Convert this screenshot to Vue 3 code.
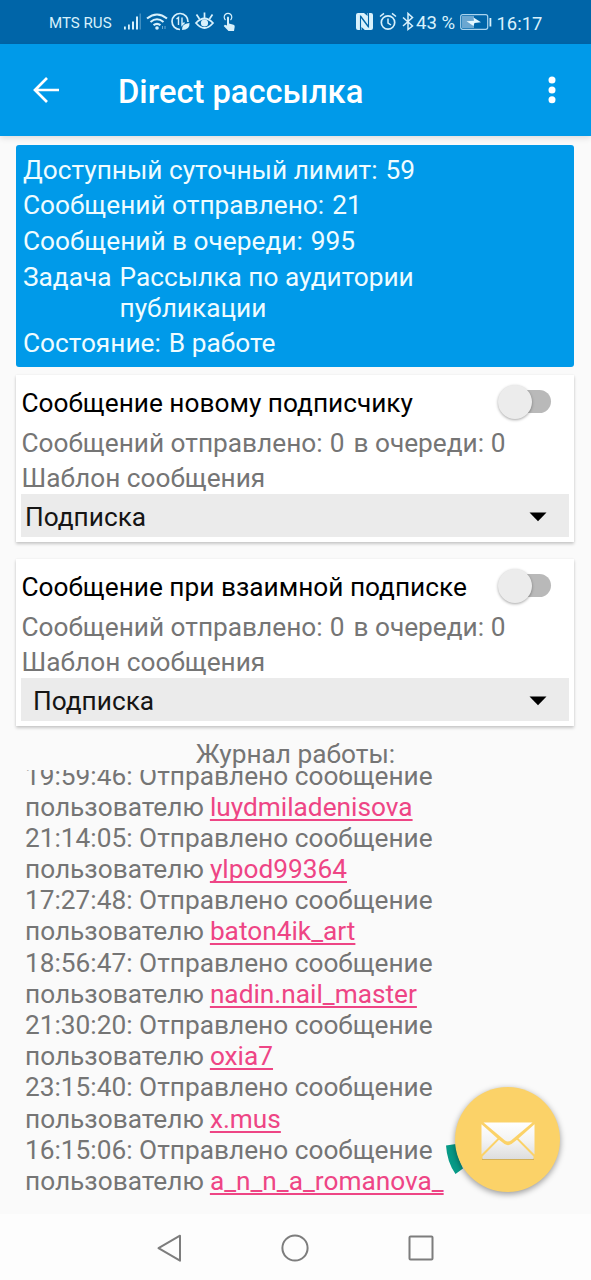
<script setup>
const stats = [
  { label: 'Доступный суточный лимит:', value: '59' },
  { label: 'Сообщений отправлено:', value: '21' },
  { label: 'Сообщений в очереди:', value: '995' },
  { label: 'Задача', value: 'Рассылка по аудитории публикации' },
  { label: 'Состояние:', value: 'В работе' },
]
const cards = [
  { title: 'Сообщение новому подписчику', template: 'Подписка', inset: false },
  { title: 'Сообщение при взаимной подписке', template: 'Подписка', inset: true },
]
const log = [
  { time: '19:59:46', user: 'luydmiladenisova' },
  { time: '21:14:05', user: 'ylpod99364' },
  { time: '17:27:48', user: 'baton4ik_art' },
  { time: '18:56:47', user: 'nadin.nail_master' },
  { time: '21:30:20', user: 'oxia7' },
  { time: '23:15:40', user: 'x.mus' },
  { time: '16:15:06', user: 'a_n_n_a_romanova_' },
]
</script>

<template>
  <div class="screen">
    <div class="status">
      <span class="carrier">MTS RUS</span>
      <svg class="left-icons" width="116" height="24" viewBox="0 0 116 24" fill="none" stroke="#d8f1fc">
        <g fill="#d8f1fc" stroke="none">
          <rect x="1" y="16.500" width="1.800" height="3" /><rect x="5" y="14.500" width="1.800" height="5" />
          <rect x="9" y="11.500" width="2" height="8" /><rect x="13" y="6.500" width="2" height="13" />
          <rect x="16.500" y="3.500" width="1.500" height="16" opacity=".3" />
        </g>
        <g stroke-width="2.100">
          <path d="M24 8.500Q34 .5 44 8.500" /><path d="M27.500 12Q34 6.500 40.500 12" /><path d="M30.500 15.200Q34 12.500 37.500 15.200" />
        </g>
        <circle cx="34" cy="18" r="1.800" fill="#d8f1fc" stroke="none" />
        <path d="M39.500 16v3M42 16v3" stroke-width="1" opacity=".5" />
        <path d="M65 12A8 8 0 1 0 57 19.500" stroke-width="1.700" />
        <path d="M53.500 9L55.500 7.500v7.500M59 7.500v7.500l2.500-2.500" stroke-width="1.400" />
        <path d="M59 20q-.5-6.500 7.500-7q.5 7-7.500 7z" fill="#d8f1fc" stroke="none" />
        <path d="M73 13Q81.500 4 90 13Q81.500 23 73 13z" stroke-width="1.800" />
        <circle cx="81.500" cy="13" r="3.600" fill="#d8f1fc" stroke="none" />
        <path d="M81.500 8V2.500M76.500 9L73.500 4.500M86.500 9l3-4.500" stroke-width="1.700" />
        <path d="M102.500 10a3.800 3.800 0 1 1 5 0" stroke-width="1.200" />
        <path d="M104 7.500q1-1.800 2 0v6l4.500 1.300q1.500.6 1.200 2l-.7 4.200h-5.500l-4.800-5 1.200-1.200 2.100.7z" fill="#d8f1fc" stroke="none" />
      </svg>
      <svg class="right-icons" width="60" height="24" viewBox="0 0 60 24" fill="none" stroke="#d8f1fc">
        <rect x="0" y="3" width="17" height="17" rx="2" fill="#d8f1fc" stroke="none" />
        <path d="M4.500 20V6.500L12.300 17M12.500 3V16.500L4.700 6" stroke="#0065a8" stroke-width="1.100" />
        <path d="M8 3h3.500v3zM5.500 17l3.300 3H5.500z" fill="#0065a8" stroke="none" />
        <circle cx="32" cy="12.500" r="6.700" stroke-width="1.700" />
        <path d="M32 8.500V13l3 2M24 6.500l4-3.200M36 3.300l4 3.200" stroke-width="1.500" />
        <path d="M47 7.500L56.500 16L52 19.500V3.500L56.500 7.500L47 16" stroke-width="1.500" />
      </svg>
      <span class="percent">43 %</span>
      <svg class="battery" width="32" height="16" viewBox="0 0 32 16">
        <rect x=".7" y=".7" width="27" height="14.600" rx="2" fill="none" stroke="#a9d4ee" stroke-width="1.200" />
        <rect x="2" y="2" width="12" height="12" fill="#6ba7d1" />
        <path d="M6.500 7.300L14 6.800L13.500 3.500L21 8.200L14.500 9L13.500 12z" fill="#e4f7ff" />
        <rect x="29.500" y="4" width="1.800" height="8.500" fill="#d8f1fc" />
      </svg>
      <span class="clock">16:17</span>
    </div>

    <header class="bar">
      <svg class="back" width="28" height="28" viewBox="0 0 28 28" fill="none" stroke="#fff" stroke-width="2.700">
        <path d="M27 14H3M15 2L3 14L15 26" />
      </svg>
      <h1>Direct рассылка</h1>
      <svg class="more" width="8" height="28" viewBox="0 0 8 28" fill="#fff">
        <circle cx="4" cy="4" r="3.500" /><circle cx="4" cy="14" r="3.500" /><circle cx="4" cy="23.800" r="3.500" />
      </svg>
    </header>

    <section class="summary">
      <div v-for="s in stats" :key="s.label" class="stat">
        <span>{{ s.label }}</span><span class="value">{{ s.value }}</span>
      </div>
    </section>

    <section v-for="c in cards" :key="c.title" class="card">
      <div class="card-head">
        <span class="card-title">{{ c.title }}</span>
        <span class="switch"><i class="track"></i><i class="thumb"></i></span>
      </div>
      <div class="muted sent">Сообщений отправлено: <span class="count">0</span> в очереди: 0</div>
      <div class="muted tpl">Шаблон сообщения</div>
      <div class="select" :class="{ inset: c.inset }">
        <span>{{ c.template }}</span>
        <svg width="18" height="10" viewBox="0 0 18 10"><path d="M.5 .5h17L9 9.300z" fill="#000" /></svg>
      </div>
    </section>

    <div class="log-title">Журнал работы:</div>
    <div class="log">
      <div class="log-inner">
        <div v-for="l in log" :key="l.time">
          <div class="line">{{ l.time }}: Отправлено сообщение</div>
          <div class="line">пользователю <a>{{ l.user }}</a></div>
        </div>
      </div>
    </div>

    <nav class="nav">
      <svg width="26" height="30" viewBox="0 0 26 30" fill="none" stroke="#7d7d7d" stroke-width="2" stroke-linejoin="round"><path d="M1.500 15.200L23 2.700V27.700z" /></svg>
      <svg width="30" height="30" viewBox="0 0 30 30" fill="none" stroke="#7d7d7d" stroke-width="2"><circle cx="15" cy="15" r="12.600" /></svg>
      <svg width="26" height="30" viewBox="0 0 26 30" fill="none" stroke="#7d7d7d" stroke-width="2"><rect x="1.500" y="3.500" width="23" height="23" rx="1" /></svg>
    </nav>

    <svg class="spinner" width="20" height="32" viewBox="0 0 20 32"><path d="M0 1.500L10 0Q11 12 17 24.500L9.500 30Q1 18 0 1.500z" fill="#089a87" /></svg>
    <div class="fab">
      <svg width="54" height="38" viewBox="0 0 54 38">
        <defs>
          <linearGradient id="paper" gradientUnits="userSpaceOnUse" x1="0" y1="0" x2="0" y2="38">
            <stop offset="0" stop-color="#fff" /><stop offset=".5" stop-color="#f3f3f3" /><stop offset="1" stop-color="#dcdcdc" />
          </linearGradient>
        </defs>
        <path d="M1 36.500h52v1.500H1z" fill="#b99b50" opacity=".6" />
        <path d="M2.500 .5h49L30 18.500Q27 20.500 24 18.500z" fill="url(#paper)" />
        <path d="M.5 2.200L16.500 16.500L.5 32.500z" fill="url(#paper)" />
        <path d="M53.500 2.200L37.500 16.500L53.500 32.500z" fill="url(#paper)" />
        <path d="M18 17.800L23.500 22Q27 24.300 30.500 22L36 17.800L52.500 34.500V37H1.500V34.500z" fill="url(#paper)" />
      </svg>
    </div>
  </div>
</template>

<style>
body { margin: 0; }
</style>

<style scoped>
.screen {
  position: relative;
  display: flex;
  flex-direction: column;
  width: 591px;
  height: 1280px;
  overflow: hidden;
  background: #fafafa;
  font-family: Roboto, "Liberation Sans", sans-serif;
  font-size: 26.250px;
  line-height: 31px;
  white-space: nowrap;
}
.status {
  display: flex;
  align-items: center;
  flex: none;
  height: 44px;
  padding-left: 49px;
  background: #0065a8;
  color: #d8f1fc;
}
.carrier { width: 74px; font-size: 15.100px; padding-top: 2px; }
.left-icons { flex: none; }
.right-icons { margin-left: 117px; flex: none; }
.percent { width: 43.500px; font-size: 18.600px; padding-top: 2px; }
.battery { flex: none; }
.clock { margin-left: 5px; font-size: 18.400px; padding-top: 2px; }
.bar {
  display: flex;
  align-items: center;
  flex: none;
  height: 92px;
  padding: 0 35.500px 0 32px;
  background: #009ae9;
  color: #fff;
  box-shadow: 0 2px 6px rgba(0, 0, 0, .12);
}
.back { flex: none; }
.bar h1 { flex: 1; margin: 3px 0 0 58px; font-size: 32.700px; font-weight: 500; line-height: 40px; }
.more { flex: none; }
.summary {
  display: flex;
  flex-direction: column;
  gap: 4.600px;
  flex: none;
  box-sizing: border-box;
  width: 558px;
  height: 222px;
  margin: 8.500px 0 0 16px;
  padding: 10.400px 7px 0;
  border-radius: 3px;
  background: #009ae9;
  color: #effcff;
}
.stat { display: flex; gap: 8px; }
.value { max-width: 320px; white-space: normal; }
.card {
  flex: none;
  box-sizing: border-box;
  width: 558px;
  height: 167px;
  margin: 8.500px 0 0 16px;
  padding: 0 5px;
  background: #fff;
  box-shadow: 0 2px 3px rgba(0, 0, 0, .2), 0 0 2px rgba(0, 0, 0, .06);
}
.card + .card { margin-top: 17px; }
.card-head { display: flex; justify-content: space-between; align-items: center; height: 53px; padding: 2px 18px 0 .5px; box-sizing: border-box; color: #000; }
.card-title { padding-top: 2px; }
.switch { position: relative; width: 53px; height: 36px; margin-top: -1px; }
.track { position: absolute; left: 12px; top: 6px; width: 41px; height: 23px; border-radius: 12px; background: #b9b9b9; }
.thumb { position: absolute; left: 0; top: 1px; width: 34px; height: 34px; border-radius: 50%; background: #ececec; box-shadow: 0 1px 3px rgba(0, 0, 0, .35); }
.muted { color: #757575; padding-left: .5px; }
.sent { height: 35px; }
.count { margin: 0 2.500px 0 .5px; }
.tpl { height: 31px; }
.select { display: flex; align-items: center; justify-content: space-between; height: 43px; padding: 3px 22px 0 4px; box-sizing: border-box; background: #ebebeb; color: #151515; }
.select span { padding-top: 1px; }
.select.inset { padding-left: 12px; }
.log-title { flex: none; height: 31px; margin-top: 12.500px; text-align: center; color: #757575; }
.log { flex: none; height: 444.500px; overflow: hidden; padding-left: 25px; color: #757575; }
.log-inner { margin-top: -9px; }
.line { height: 31.200px; line-height: 31.200px; }
.line a { color: #ee4585; margin-left: -.5px; text-decoration: underline; text-decoration-thickness: 1.500px; text-underline-offset: 3px; text-decoration-skip-ink: none; }
.nav { display: flex; align-items: center; gap: 97.500px; flex: 1; padding: 1px 0 0 156.500px; background: #fdfdfd; }
.nav svg { flex: none; }
.spinner { position: absolute; left: 446px; top: 1144px; }
.fab {
  position: absolute;
  left: 455px;
  top: 1087px;
  display: flex;
  align-items: center;
  justify-content: center;
  width: 105px;
  height: 105px;
  padding-top: 3px;
  box-sizing: border-box;
  border-radius: 50%;
  background: #fbd268;
  box-shadow: 0 2px 6px rgba(0, 0, 0, .4);
}
</style>
